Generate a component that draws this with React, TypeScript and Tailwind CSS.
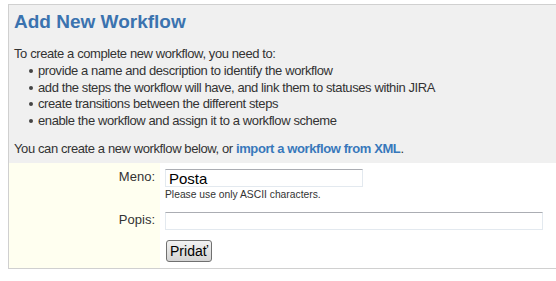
const steps = [
  "provide a name and description to identify the workflow",
  "add the steps the workflow will have, and link them to statuses within JIRA",
  "create transitions between the different steps",
  "enable the workflow and assign it to a workflow scheme",
];

export default function App() {
  return (
    <div className="h-[281px] w-[556px] overflow-hidden bg-white pl-[8px] pt-[4px] font-['Liberation_Sans',Arial,sans-serif] text-[13px] text-[#333]">
      <div className="w-[600px] border border-r-0 border-[#d0d0d0]">
        <div className="bg-[#f0f0f0] pb-[6px] pl-[5px] pt-[5px] tracking-[-0.4px]">
          <h2 className="text-[19px] font-bold leading-[24px] tracking-normal text-[#3b73af]">Add New Workflow</h2>
          <p className="mt-[12px] leading-[16px]">To create a complete new workflow, you need to:</p>
          <ul className="mt-[1px] pl-[15px]">
            {steps.map((s) => (
              <li key={s} className="flex items-center leading-[16.5px]">
                <span className="mr-[5px] h-[4px] w-[4px] rounded-full bg-[#444]" />
                {s}
              </li>
            ))}
          </ul>
          <p className="mt-[12px] leading-[16px]">
            You can create a new workflow below, or{" "}
            <a href="#" className="font-bold text-[#3878bb]">import a workflow from XML</a>.
          </p>
        </div>
        <div className="flex">
          <div className="w-[151px] bg-[#fffff0]">
            <div className="h-[42px] pr-[5px] pt-[5px] text-right leading-[18px]">Meno:</div>
            <div className="h-[29px] pr-[5px] pt-[6px] text-right leading-[18px]">Popis:</div>
          </div>
          <div className="flex flex-col pl-[5px] pt-[6px]">
            <input
              defaultValue="Posta"
              className="h-[18px] w-[198px] border border-[#e3e9ef] border-t-[#abadb3] px-[3px] text-[15px] leading-[16px] text-black outline-none"
            />
            <div className="mt-[2px] text-[10.3px] leading-[12px]">Please use only ASCII characters.</div>
            <input className="mt-[11px] h-[18px] w-[378px] border border-[#e3e9ef] border-t-[#abadb3] outline-none" />
            <button className="mb-[6px] ml-[1px] mt-[10px] h-[22px] w-[46px] rounded-[3px] border border-[#707070] bg-gradient-to-b from-[#f2f2f2] to-[#d4d4d4] text-[14px] leading-[18px] text-black">
              Pridať
            </button>
          </div>
        </div>
      </div>
    </div>
  );
}
